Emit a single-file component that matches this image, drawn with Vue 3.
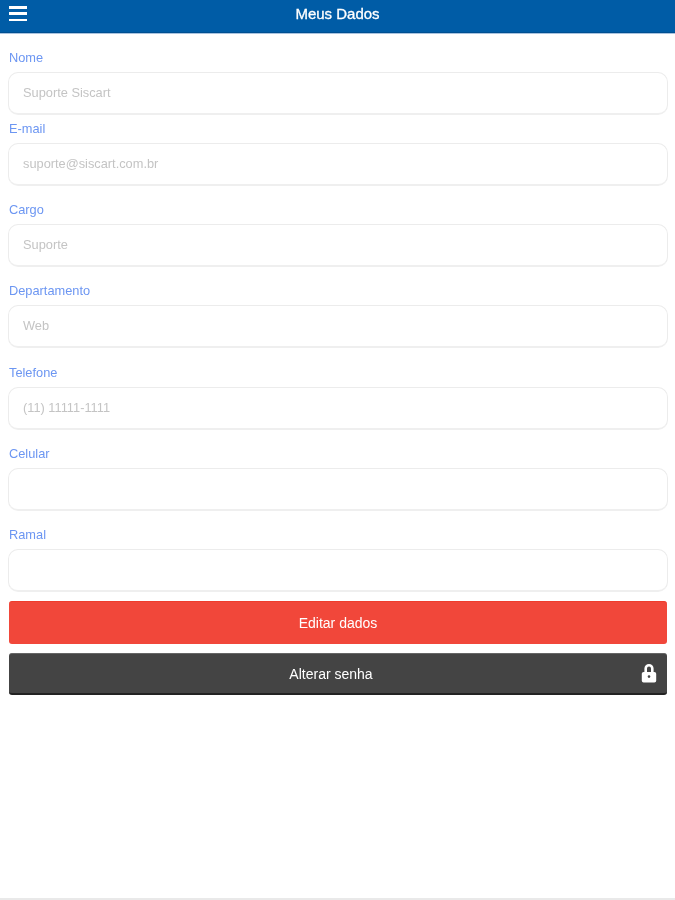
<script setup>
const fields = [
  { label: 'Nome', value: 'Suporte Siscart' },
  { label: 'E-mail', value: 'suporte@siscart.com.br' },
  { label: 'Cargo', value: 'Suporte' },
  { label: 'Departamento', value: 'Web' },
  { label: 'Telefone', value: '(11) 11111-1111' },
  { label: 'Celular', value: '' },
  { label: 'Ramal', value: '' }
]
</script>

<template>
  <div class="page">
    <header class="topbar">
      <button class="menu-btn" aria-label="Menu">
        <span></span><span></span><span></span>
      </button>
      <h1 class="title">Meus Dados</h1>
    </header>

    <form class="form" @submit.prevent>
      <div v-for="f in fields" :key="f.label" class="field">
        <label class="field-label">{{ f.label }}</label>
        <div class="input-box">
          <span class="placeholder">{{ f.value }}</span>
        </div>
      </div>

      <div class="actions">
        <button class="btn btn-red">Editar dados</button>
        <button class="btn btn-dark">
          <span class="btn-text">Alterar senha</span>
          <svg class="lock" width="16" height="20" viewBox="0 0 16 20">
            <path d="M4.7 9V4.6a3.3 3.3 0 0 1 6.6 0V9" fill="none" stroke="#fff" stroke-width="2.6" />
            <rect x="0.8" y="8" width="14.4" height="10.6" rx="1.8" fill="#fff" />
            <circle cx="8" cy="12.6" r="1.3" fill="#444" />
          </svg>
        </button>
      </div>
    </form>

    <div class="footer-line"></div>
  </div>
</template>

<style>
body {
  margin: 0;
  background: #fff;
}
</style>

<style scoped>
.page {
  position: relative;
  display: flex;
  flex-direction: column;
  height: 900px;
  font-family: "Liberation Sans", Arial, sans-serif;
  background: #fff;
  filter: blur(0.6px);
}

.topbar {
  position: relative;
  flex: none;
  display: flex;
  align-items: center;
  justify-content: center;
  height: 32px;
  background: #005ca6;
  border-bottom: 1px solid #004f91;
  box-shadow: 0 1px 0 #a9c3df;
}

.menu-btn {
  position: absolute;
  left: 9px;
  top: 6px;
  display: flex;
  flex-direction: column;
  justify-content: space-between;
  width: 18px;
  height: 15px;
  padding: 0;
  background: none;
  border: 0;
}

.menu-btn span {
  display: block;
  height: 2.5px;
  background: #fff;
}

.title {
  margin: -6px 0 0;
  font-size: 15px;
  font-weight: 400;
  color: #fff;
  -webkit-text-stroke: 0.3px #fff;
}

.form {
  display: flex;
  flex-direction: column;
  padding: 0 7px 0 8px;
}

.field {
  margin-top: 16.2px;
}

.field:first-child {
  margin-top: 17px;
}

.field:nth-child(2) {
  margin-top: 6px;
}

.field-label {
  display: block;
  height: 22px;
  padding-left: 1px;
  font-size: 12.8px;
  line-height: 16px;
  color: #6c96f2;
}

.input-box {
  display: flex;
  align-items: center;
  height: 39px;
  padding: 0 0 1px 14px;
  background: #fff;
  border: 1px solid #ececec;
  border-bottom: 2px solid #efefef;
  border-radius: 10px;
}

.placeholder {
  font-size: 12.8px;
  color: #c4c4c4;
}

.actions {
  display: flex;
  flex-direction: column;
  gap: 9px;
  margin-top: 9px;
  padding: 0 1px;
}

.btn {
  position: relative;
  display: flex;
  align-items: center;
  justify-content: center;
  height: 43px;
  padding: 0;
  border: 0;
  border-radius: 3px;
  font-family: inherit;
  font-size: 14px;
  color: #fff;
}

.btn-red {
  background: #f1473a;
  border-top: 1px solid #ee3c2c;
}

.btn-dark {
  height: 42.5px;
  padding-top: 1px;
  background: #444;
  border-top: 1px solid #666;
  border-bottom: 2px solid #222;
}

.btn-text {
  margin-right: 14px;
}

.lock {
  position: absolute;
  right: 10px;
  top: 10px;
}

.footer-line {
  position: absolute;
  left: 0;
  right: 0;
  bottom: 0;
  height: 2px;
  background: #e9e9e9;
}
</style>
